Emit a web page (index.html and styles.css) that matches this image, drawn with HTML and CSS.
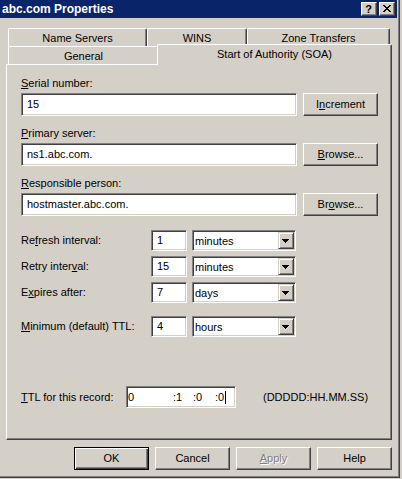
FILE: index.html
```html
<!DOCTYPE html>
<html lang="en">
<head>
    <meta charset="UTF-8">
    <title>abc.com Properties</title>
    <link rel="stylesheet" href="styles.css">
</head>
<body>
    <div class="window">
        <div class="frame">
            <div class="titlebar">
                <span class="title">abc.com Properties</span>
                <div class="caption-buttons">
                    <span class="caption-btn help">?</span>
                    <span class="caption-btn close">
                        <svg width="8" height="7" viewBox="0 0 8 7" shape-rendering="crispEdges">
                            <rect x="0" y="0" width="2" height="1"/><rect x="6" y="0" width="2" height="1"/>
                            <rect x="1" y="1" width="2" height="1"/><rect x="5" y="1" width="2" height="1"/>
                            <rect x="2" y="2" width="4" height="1"/>
                            <rect x="3" y="3" width="2" height="1"/>
                            <rect x="2" y="4" width="4" height="1"/>
                            <rect x="1" y="5" width="2" height="1"/><rect x="5" y="5" width="2" height="1"/>
                            <rect x="0" y="6" width="2" height="1"/><rect x="6" y="6" width="2" height="1"/>
                        </svg>
                    </span>
                </div>
            </div>

            <div class="dialog">
                <div class="tabs">
                    <div class="tab-row">
                        <div class="tab tab-ns">Name Servers</div>
                        <div class="tab tab-wins">WINS</div>
                        <div class="tab tab-zt">Zone Transfers</div>
                    </div>
                    <div class="tab-row">
                        <div class="tab tab-general">General</div>
                        <div class="tab tab-soa active">Start of Authority (SOA)</div>
                    </div>
                </div>

                <div class="panel">
                    <div class="field">
                        <div class="label"><u>S</u>erial number:</div>
                        <div class="field-row">
                            <div class="edit wide">15</div>
                            <div class="btn">I<u>n</u>crement</div>
                        </div>
                    </div>
                    <div class="field">
                        <div class="label"><u>P</u>rimary server:</div>
                        <div class="field-row">
                            <div class="edit wide">ns1.abc.com.</div>
                            <div class="btn"><u>B</u>rowse...</div>
                        </div>
                    </div>
                    <div class="field">
                        <div class="label"><u>R</u>esponsible person:</div>
                        <div class="field-row">
                            <div class="edit wide">hostmaster.abc.com.</div>
                            <div class="btn">Br<u>o</u>wse...</div>
                        </div>
                    </div>

                    <div class="intervals">
                        <div class="interval">
                            <div class="label">Re<u>f</u>resh interval:</div>
                            <div class="edit num">1</div>
                            <div class="combo"><span class="combo-text">minutes</span><span class="drop"><svg width="7" height="4" viewBox="0 0 7 4" shape-rendering="crispEdges"><path d="M0 0h7v1h-1v1h-1v1h-1v1h-1v-1h-1v-1h-1v-1h-1z"/></svg></span></div>
                        </div>
                        <div class="interval">
                            <div class="label">Retry inter<u>v</u>al:</div>
                            <div class="edit num">15</div>
                            <div class="combo"><span class="combo-text">minutes</span><span class="drop"><svg width="7" height="4" viewBox="0 0 7 4" shape-rendering="crispEdges"><path d="M0 0h7v1h-1v1h-1v1h-1v1h-1v-1h-1v-1h-1v-1h-1z"/></svg></span></div>
                        </div>
                        <div class="interval">
                            <div class="label">E<u>x</u>pires after:</div>
                            <div class="edit num">7</div>
                            <div class="combo"><span class="combo-text">days</span><span class="drop"><svg width="7" height="4" viewBox="0 0 7 4" shape-rendering="crispEdges"><path d="M0 0h7v1h-1v1h-1v1h-1v1h-1v-1h-1v-1h-1v-1h-1z"/></svg></span></div>
                        </div>
                        <div class="interval minimum">
                            <div class="label"><u>M</u>inimum (default) TTL:</div>
                            <div class="edit num">4</div>
                            <div class="combo"><span class="combo-text">hours</span><span class="drop"><svg width="7" height="4" viewBox="0 0 7 4" shape-rendering="crispEdges"><path d="M0 0h7v1h-1v1h-1v1h-1v1h-1v-1h-1v-1h-1v-1h-1z"/></svg></span></div>
                        </div>
                    </div>

                    <div class="ttl-row">
                        <div class="label"><u>T</u>TL for this record:</div>
                        <div class="edit ttl">
                            <span class="seg seg-days">0</span>
                            <span class="seg seg-h">:1</span>
                            <span class="seg seg-m">:0</span>
                            <span class="seg seg-s">:0</span><span class="caret"></span>
                        </div>
                        <div class="ttl-format">(DDDDD:HH.MM.SS)</div>
                    </div>
                </div>

                <div class="buttons">
                    <div class="btn default">OK</div>
                    <div class="btn">Cancel</div>
                    <div class="btn disabled"><u>A</u>pply</div>
                    <div class="btn">Help</div>
                </div>
            </div>
        </div>
    </div>
</body>
</html>
```

FILE: styles.css
```css
* { margin: 0; padding: 0; box-sizing: border-box; }
body {
    width: 402px;
    height: 479px;
    overflow: hidden;
    background: #d4d0c8;
    font: 11px/13px "Liberation Sans", Arial, sans-serif;
    color: #000;
}
u { text-underline-offset: 1px; }

/* window frame */
.window {
    width: 400px;
    height: 478px;
    border-right: 1px solid #404040;
    border-bottom: 1px solid #404040;
}
.frame {
    height: 100%;
    padding-right: 1px;
    border-right: 1px solid #808080;
    border-bottom: 1px solid #808080;
    background: #d4d0c8;
}
.titlebar {
    height: 18px;
    padding: 0 2px;
    background: #0a246a;
    color: #fff;
    display: flex;
    align-items: center;
    justify-content: space-between;
}
.title { font-weight: bold; font-size: 12px; }
.caption-buttons { display: flex; gap: 2px; }
.caption-btn {
    width: 16px;
    height: 14px;
    background: #d4d0c8;
    color: #000;
    border: 1px solid;
    border-color: #fff #404040 #404040 #fff;
    box-shadow: inset -1px -1px #808080;
    display: flex;
    align-items: center;
    justify-content: center;
}
.caption-btn.help { font-weight: bold; font-size: 11px; line-height: 12px; padding-right: 1px; }
.caption-btn.close { padding: 0 1px 1px 0; }

/* tabs */
.dialog { padding-top: 10px; }
.tabs { margin-left: 8px; height: 36px; }
.tab-row { display: flex; align-items: flex-start; }
.tab {
    height: 18px;
    line-height: 18px;
    text-align: center;
    background: #d4d0c8;
    border-left: 1px solid #fff;
    border-top: 1px solid #fff;
    border-right: 1px solid #404040;
    box-shadow: inset -1px 0 #808080;
    border-radius: 2px 2px 0 0;
}
.tab-ns { width: 139px; }
.tab-wins { width: 100px; }
.tab-zt { width: 143px; }
.tab-general { width: 151px; }
.tab-soa {
    width: 235px;
    height: 21px;
    line-height: 18px;
    margin: -2px 0 -1px -2px;
    position: relative;
    z-index: 1;
}

/* property page */
.panel {
    margin-left: 6px;
    width: 386px;
    height: 376px;
    padding: 12px 0 0 14px;
    border-left: 1px solid #fff;
    border-top: 1px solid #fff;
    border-right: 1px solid #404040;
    border-bottom: 1px solid #404040;
    box-shadow: inset -1px -1px #808080;
}
.label { height: 13px; white-space: nowrap; }
.field { margin-bottom: 11px; }
.field .label { margin-bottom: 3px; }
.field-row { display: flex; gap: 6px; }

.edit {
    height: 23px;
    background: #fff;
    padding-left: 3px;
    border: 1px solid;
    border-color: #808080 #fff #fff #808080;
    box-shadow: inset 1px 1px #404040, inset -1px -1px #d4d0c8;
    display: flex;
    align-items: center;
    white-space: nowrap;
}
.edit.wide { width: 276px; padding-left: 5px; }

.btn {
    width: 75px;
    height: 23px;
    background: #d4d0c8;
    border: 1px solid;
    border-color: #fff #404040 #404040 #fff;
    box-shadow: inset -1px -1px #808080;
    display: flex;
    align-items: center;
    justify-content: center;
    white-space: nowrap;
}
.btn.default {
    border-color: #000;
    box-shadow: inset 1px 1px #fff, inset -1px -1px #404040, inset -2px -2px #808080;
}
.btn.disabled { color: #808080; text-shadow: 1px 1px #fff; }

/* sibling margins collapse, so each gap is set as the larger value */
.intervals { margin-top: 14px; }
.interval { display: flex; align-items: center; height: 21px; margin-bottom: 5px; }
.interval.minimum { margin-top: 13px; }
.interval .label { width: 130px; }
.edit.num { width: 36px; height: 21px; padding-left: 5px; }
.combo {
    width: 104px;
    height: 21px;
    margin-left: 5px;
    padding: 1px;
    background: #fff;
    border: 1px solid;
    border-color: #808080 #fff #fff #808080;
    box-shadow: inset 1px 1px #404040, inset -1px -1px #d4d0c8;
    display: flex;
    align-items: center;
}
.combo-text { flex: 1; padding-left: 1px; padding-top: 2px; }
.drop {
    width: 16px;
    height: 17px;
    background: #d4d0c8;
    border: 1px solid;
    border-color: #d4d0c8 #404040 #404040 #d4d0c8;
    box-shadow: inset 1px 1px #fff, inset -1px -1px #808080;
    display: flex;
    align-items: center;
    justify-content: center;
    padding: 0 1px 0 0;
}

.ttl-row { display: flex; align-items: center; margin-top: 49px; height: 22px; }
.ttl-row .label { width: 105px; }
.edit.ttl { width: 110px; height: 22px; padding-left: 1px; }
.seg-days { width: 45px; }
.seg-h { width: 20px; }
.seg-m { width: 22px; }
.caret { width: 1px; height: 13px; background: #000; margin-left: 1px; }
.ttl-format { margin-left: 27px; }

/* dialog buttons */
.buttons {
    width: 392px;
    margin-top: 7px;
    display: flex;
    justify-content: flex-end;
    gap: 6px;
}
```
